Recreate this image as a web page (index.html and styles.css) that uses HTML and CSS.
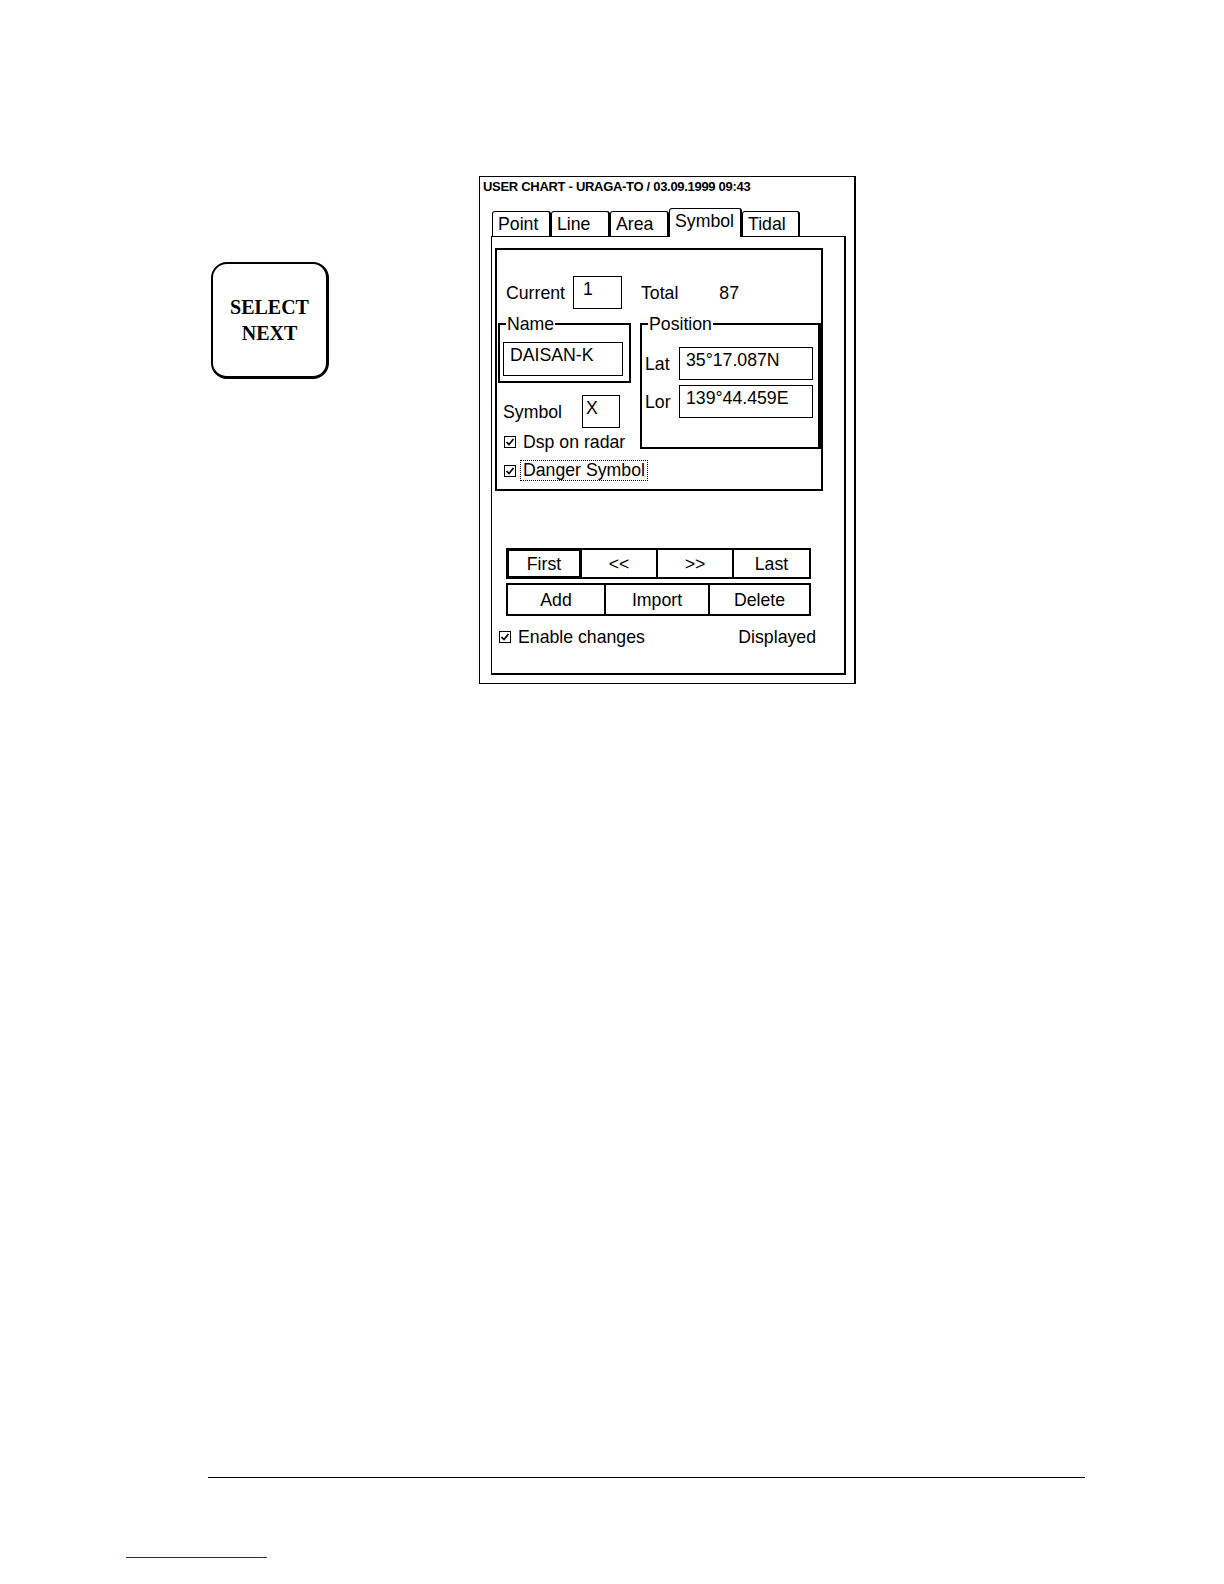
FILE: index.html
```html
<!DOCTYPE html>
<html lang="en">
<head>
<meta charset="utf-8">
<title>User Chart - Symbol</title>
<link rel="stylesheet" href="styles.css">
</head>
<body>
<div class="sheet">
  <div class="top-row">
    <div class="key">
      <span>SELECT</span>
      <span>NEXT</span>
    </div>
    <div class="dialog">
      <div class="title">USER CHART - URAGA-TO / 03.09.1999 09:43</div>
      <div class="tabs">
        <span class="tab-edge"></span>
        <span class="tab w59">Point</span>
        <span class="tab w59">Line</span>
        <span class="tab w59">Area</span>
        <span class="tab active w73">Symbol</span>
        <span class="tab w58">Tidal</span>
        <span class="tab-fill"></span>
      </div>
      <div class="panel">
        <div class="group">
          <div class="current-row">
            <span class="lbl">Current</span>
            <span class="inp cur">1</span>
            <span class="lbl total">Total</span>
            <span class="lbl count">87</span>
          </div>
          <div class="cols">
            <div class="left-col">
              <fieldset class="fs name-fs">
                <legend>Name</legend>
                <div class="inp name-inp">DAISAN-K</div>
              </fieldset>
              <div class="symbol-row">
                <span class="lbl">Symbol</span>
                <span class="inp sym">X</span>
              </div>
              <div class="check-row">
                <svg class="cb" width="12" height="12" viewBox="0 0 12 12"><rect x="0.5" y="0.5" width="11" height="11" fill="#fff" stroke="#000" stroke-width="1"/><polyline points="2.5,6 5,8.5 9.5,3" fill="none" stroke="#000" stroke-width="1.7"/></svg>
                <span class="cb-text">Dsp on radar</span>
              </div>
              <div class="check-row danger">
                <svg class="cb" width="12" height="12" viewBox="0 0 12 12"><rect x="0.5" y="0.5" width="11" height="11" fill="#fff" stroke="#000" stroke-width="1"/><polyline points="2.5,6 5,8.5 9.5,3" fill="none" stroke="#000" stroke-width="1.7"/></svg>
                <span class="cb-text focus">Danger Symbol</span>
              </div>
            </div>
            <fieldset class="fs pos-fs">
              <legend>Position</legend>
              <div class="pos-row">
                <span class="lbl pos-lbl">Lat</span>
                <span class="inp pos-inp">35°17.087N</span>
              </div>
              <div class="pos-row lor">
                <span class="lbl pos-lbl">Lor</span>
                <span class="inp pos-inp">139°44.459E</span>
              </div>
            </fieldset>
          </div>
        </div>
        <div class="btn-row nav">
          <span class="btn default w76">First</span>
          <span class="btn next w76">&lt;&lt;</span>
          <span class="btn next w76">&gt;&gt;</span>
          <span class="btn next w77">Last</span>
        </div>
        <div class="btn-row act">
          <span class="btn w100">Add</span>
          <span class="btn next w104">Import</span>
          <span class="btn next w101">Delete</span>
        </div>
        <div class="status-row">
          <svg class="cb" width="12" height="12" viewBox="0 0 12 12"><rect x="0.5" y="0.5" width="11" height="11" fill="#fff" stroke="#000" stroke-width="1"/><polyline points="2.5,6 5,8.5 9.5,3" fill="none" stroke="#000" stroke-width="1.7"/></svg>
          <span class="cb-text">Enable changes</span>
          <span class="displayed">Displayed</span>
        </div>
      </div>
    </div>
  </div>
  <div class="rule"></div>
  <div class="footnote-rule"></div>
</div>
</body>
</html>
```
FILE: styles.css
```css
* {
  box-sizing: border-box;
}

html, body {
  margin: 0;
  padding: 0;
  background: #fff;
  color: #000;
}

body {
  font-family: "Liberation Sans", Arial, sans-serif;
  width: 1224px;
  height: 1584px;
  overflow: hidden;
}

.sheet {
  display: flow-root;
}

.top-row {
  display: flex;
  align-items: flex-start;
  padding-top: 176px;
}

/* Hardware key */
.key {
  margin-left: 211px;
  margin-top: 86px;
  width: 118px;
  height: 117px;
  border: 2px solid #000;
  border-right-width: 3px;
  border-bottom-width: 3px;
  border-radius: 16px;
  display: flex;
  flex-direction: column;
  align-items: center;
  justify-content: center;
  font-family: "Liberation Serif", "Times New Roman", serif;
  font-size: 20px;
  font-weight: bold;
  line-height: 26px;
}

/* Dialog window */
.dialog {
  margin-left: 150px;
  width: 377px;
  height: 508px;
  border: 1px solid #000;
  border-right-width: 2px;
  font-size: 17.7px;
}

.title {
  padding: 2px 0 0 3px;
  font-size: 13px;
  font-weight: bold;
  line-height: 15px;
  letter-spacing: -0.3px;
  white-space: nowrap;
}

.tabs {
  display: flex;
  align-items: flex-end;
  margin: 14px 0 0 11px;
  width: 355px;
  height: 29px;
}

.tab-edge {
  width: 1px;
  height: 1px;
  border-bottom: 1px solid #000;
}

.tab {
  height: 26px;
  border: 1px solid #000;
  border-right-width: 2px;
  border-radius: 3px 3px 0 0;
  padding-left: 5px;
  line-height: 24px;
  white-space: nowrap;
}

.tab.active {
  height: 29px;
  border-bottom: none;
}

.tab-fill {
  flex: 1;
  height: 1px;
  border-bottom: 1px solid #000;
}

.w58 { width: 58px; }
.w59 { width: 59px; }
.w73 { width: 73px; }
.w76 { width: 76px; }
.w77 { width: 77px; }
.w100 { width: 100px; }
.w101 { width: 101px; }
.w104 { width: 104px; }

.panel {
  display: flow-root;
  margin-left: 11px;
  width: 355px;
  height: 438px;
  border-left: 1px solid #000;
  border-right: 2px solid #000;
  border-bottom: 2px solid #000;
}

.group {
  margin: 11px 0 0 3px;
  width: 328px;
  height: 243px;
  border: 2px solid #000;
}

.lbl {
  line-height: 20px;
  white-space: nowrap;
}

.inp {
  display: block;
  border: 1px solid #000;
  padding-top: 2px;
  line-height: 20px;
  white-space: nowrap;
}

.current-row {
  display: flex;
  align-items: center;
  margin-top: 26px;
  padding-left: 9px;
  height: 33px;
}

.inp.cur {
  width: 49px;
  height: 33px;
  margin-left: 8px;
  padding-left: 9px;
}

.total {
  margin-left: 19px;
}

.count {
  margin-left: 41px;
}

.cols {
  display: flex;
  align-items: flex-start;
  margin-top: 6px;
}

.left-col {
  margin-left: 1px;
  width: 133px;
}

.fs {
  margin: 0;
  border: 2px solid #000;
  min-width: 0;
}

.fs legend {
  padding: 0 1px;
  margin-left: 3px;
  line-height: 18px;
}

.name-fs {
  width: 133px;
  padding: 9px 0 5px 3px;
}

.inp.name-inp {
  width: 120px;
  height: 34px;
  padding-left: 6px;
}

.symbol-row {
  display: flex;
  align-items: center;
  margin: 12px 0 0 5px;
  width: 140px;
}

.inp.sym {
  width: 38px;
  height: 33px;
  margin-left: 20px;
  padding-left: 3px;
}

.check-row {
  display: flex;
  align-items: center;
  margin: 4px 0 0 6px;
  height: 20px;
  width: 150px;
}

.check-row.danger {
  margin-top: 8px;
  height: 21px;
}

.cb {
  display: block;
  flex: none;
}

.cb-text {
  margin-left: 7px;
  line-height: 20px;
  white-space: nowrap;
}

.cb-text.focus {
  margin-left: 4px;
  padding: 0 2px;
  border: 1px dotted #000;
  line-height: 19px;
}

.pos-fs {
  margin-left: 9px;
  width: 181px;
  height: 134px;
  padding: 14px 0 0 3px;
  border-right-width: 3px;
}

.pos-row {
  display: flex;
  align-items: center;
}

.pos-row.lor {
  margin-top: 5px;
}

.pos-lbl {
  width: 34px;
}

.inp.pos-inp {
  width: 134px;
  height: 33px;
  padding-left: 6px;
}

.btn-row {
  display: flex;
  margin-left: 14px;
}

.btn-row.nav {
  margin-top: 57px;
  height: 31px;
}

.btn-row.act {
  margin-top: 4px;
  height: 33px;
}

.btn {
  display: flex;
  align-items: center;
  justify-content: center;
  height: 100%;
  border: 2px solid #000;
  line-height: 20px;
}

.btn.next {
  border-left-width: 0;
}

.btn.default {
  border-width: 3px;
}

.status-row {
  display: flex;
  align-items: center;
  margin-top: 11px;
  padding-left: 7px;
  height: 20px;
}

.displayed {
  margin-left: auto;
  margin-right: 28px;
  line-height: 20px;
}

.rule {
  margin: 793px 0 0 208px;
  width: 877px;
  height: 1px;
  background: #000;
}

.footnote-rule {
  margin: 79px 0 0 126px;
  width: 141px;
  height: 1px;
  background: #1f1f9f;
}
```
